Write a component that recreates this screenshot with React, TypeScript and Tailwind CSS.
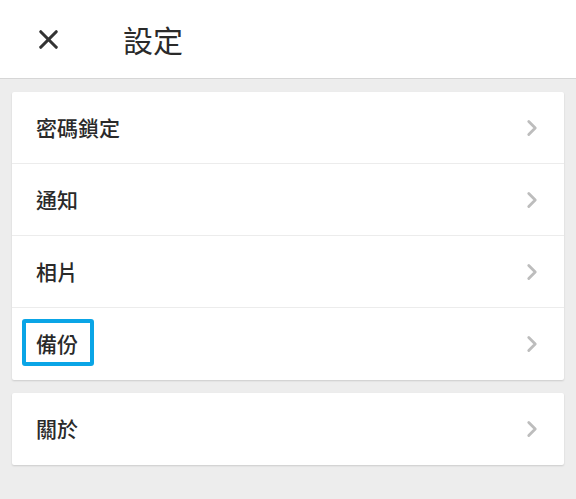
import { X, ChevronRight } from 'lucide-react'

const font = { fontFamily: '"Noto Sans CJK TC", "Noto Sans", sans-serif' }

const mainItems = ['密碼鎖定', '通知', '相片', '備份']

const Row = ({ label, last, highlight }: { label: string; last?: boolean; highlight?: boolean }) => (
    <div
        className={`relative flex h-[72px] items-center justify-between pl-6 pr-[19px] ${
            last ? '' : 'border-b border-[#ececec]'
        }`}
    >
        <span className="text-[21px] font-medium text-[#2a2a2a]">{label}</span>
        <ChevronRight className="h-[26px] w-[26px] text-[#bdbdbd]" strokeWidth={2.6} />
        {highlight && (
            <div className="absolute left-[10px] top-[11px] h-[47px] w-[72px] rounded-[3px] border-[4px] border-[#0aa5e6]" />
        )}
    </div>
)

const App = () => {
    return (
        <div className="min-h-[499px] w-[576px] bg-[#ededed]" style={font}>
            <div className="flex h-[79px] items-center border-b border-[#d6d6d6] bg-white">
                <X className="ml-[33px] h-[31px] w-[31px] text-[#333]" strokeWidth={2.4} />
                <h1 className="ml-[59px] text-[30px] text-[#2a2a2a]">設定</h1>
            </div>
            <div className="mx-3 mt-[13px] rounded-[2px] bg-white shadow-[0_1px_2px_rgba(0,0,0,0.14)]">
                {mainItems.map((item, i) => (
                    <Row key={item} label={item} last={i === mainItems.length - 1} highlight={item === '備份'} />
                ))}
            </div>
            <div className="mx-3 mt-[13px] rounded-[2px] bg-white shadow-[0_1px_2px_rgba(0,0,0,0.14)]">
                <Row label="關於" last />
            </div>
        </div>
    )
}

export default App
